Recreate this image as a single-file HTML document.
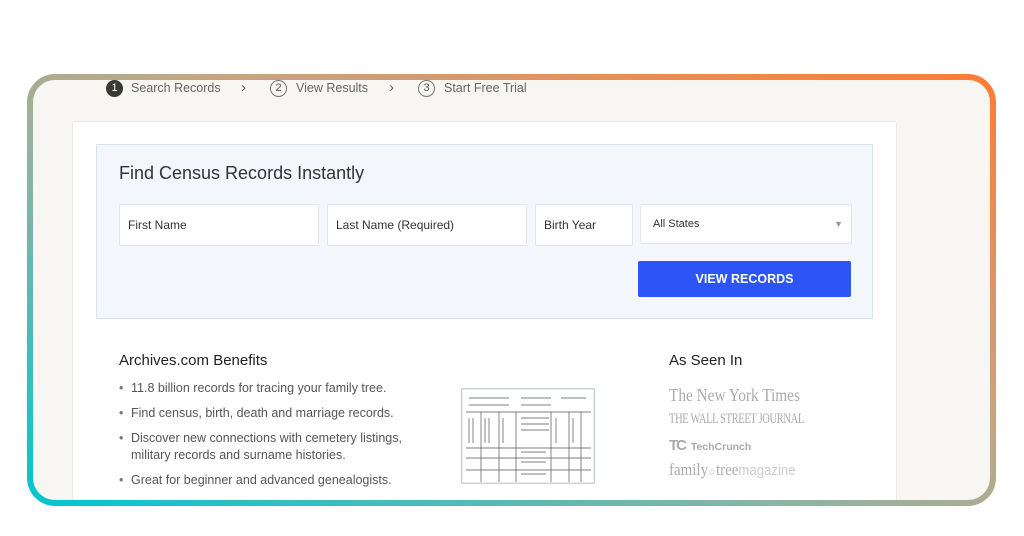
<!DOCTYPE html>
<html><head><style>
*{margin:0;padding:0;box-sizing:border-box}
body{width:1024px;height:536px;background:#fff;font-family:"Liberation Sans",sans-serif;position:relative;overflow:hidden}
.frame{position:absolute;left:27px;top:74px;width:969px;height:432px;border-radius:28px;background:linear-gradient(to top right,#00c6d0 0%,#8fb3a2 40%,#c7a57f 60%,#ff7b35 100%);padding:6px}
.inner{position:relative;width:100%;height:100%;border-radius:22px;background:#f7f6f3;overflow:hidden}
.abs{position:absolute}
.st{position:absolute;top:0;font-size:12.5px;color:#666;line-height:16px;white-space:nowrap}
.c{position:absolute;top:0;width:17px;height:17px;border-radius:50%;border:1px solid #777;text-align:center;line-height:15px;font-size:11px;color:#555}
.c.f{background:#3a3a34;color:#fff;border-color:#3a3a34}
.card{left:39px;top:41px;width:825px;height:400px;background:#fff;border:1px solid #e8e8e8;border-radius:3px}
.blue{left:23px;top:22px;width:777px;height:175px;background:#f3f7fb;border:1px solid #d5e4f3}
h2{position:absolute;left:22px;top:18px;font-size:18px;font-weight:normal;color:#333}
.in{position:absolute;top:59px;height:42px;background:#fff;border:1px solid #e2e6ea;border-radius:2px;font-size:12px;color:#333;padding-left:8px;line-height:40px}
.btn{position:absolute;left:541px;top:116px;width:213px;height:36px;background:#2d55f5;color:#fff;font-size:12.5px;font-weight:bold;text-align:center;line-height:36px;border-radius:2px}
h3{position:absolute;font-size:15px;color:#222;font-weight:normal}
ul{position:absolute;left:46px;top:258px;list-style:none;font-size:12.5px;color:#555;line-height:17px}
ul li{padding-left:12px;position:relative;margin-bottom:8px;width:300px}
ul li:before{content:"•";position:absolute;left:0;color:#777}
.logo{position:absolute;left:596px;color:#aaa;font-family:"Liberation Serif",serif;white-space:nowrap;transform-origin:left top}
</style></head><body>
<div class="frame"><div class="inner">
<span class="c f" style="left:73px">1</span><span class="st" style="left:98px">Search Records</span><span class="st" style="left:208px;font-size:15px">&#8250;</span>
<span class="c" style="left:237px">2</span><span class="st" style="left:263px">View Results</span><span class="st" style="left:356px;font-size:15px">&#8250;</span>
<span class="c" style="left:385px">3</span><span class="st" style="left:411px">Start Free Trial</span>
<div class="abs card">
 <div class="abs blue">
  <h2>Find Census Records Instantly</h2>
  <div class="in" style="left:22px;width:200px">First Name</div>
  <div class="in" style="left:230px;width:200px">Last Name (Required)</div>
  <div class="in" style="left:438px;width:98px">Birth Year</div>
  <div class="in" style="left:543px;width:212px;height:40px;font-size:11px;line-height:38px;padding-left:12px">All States<span style="position:absolute;right:8px;top:0;color:#999;font-size:9px">&#9660;</span></div>
  <div class="btn">VIEW RECORDS</div>
 </div>
 <h3 style="left:46px;top:230px">Archives.com Benefits</h3>
 <ul>
  <li>11.8 billion records for tracing your family tree.</li>
  <li>Find census, birth, death and marriage records.</li>
  <li>Discover new connections with cemetery listings, military records and surname histories.</li>
  <li>Great for beginner and advanced genealogists.</li>
 </ul>
 <svg class="abs" style="left:388px;top:266px" width="134" height="96" viewBox="0 0 134 96"><rect x="0.5" y="0.5" width="133" height="95" fill="#fff" stroke="#c9d3da" stroke-width="2"/><g stroke="#555" stroke-width="0.7" fill="none"><path d="M5 24H130M5 60H130M5 70H130M5 82H130M20 24V94M38 24V94M55 24V94M90 24V94M108 24V94M120 24V94M8 10h40M60 10h30M100 10h25M8 17h40M60 17h30"/><path d="M8 30v25M12 30v25M24 30v25M28 30v25M42 30v25M60 30h28M60 36h28M60 42h28M95 30v25M112 30v25M60 64h25M60 74h25M60 86h25"/></g></svg>
 <h3 style="left:596px;top:230px">As Seen In</h3>
 <div class="logo" style="top:263px;font-size:18px;transform:scaleX(0.85)">The New York Times</div>
 <div class="logo" style="top:289px;font-size:15px;letter-spacing:-0.5px;transform:scaleX(0.7)">THE WALL STREET JOURNAL</div>
 <div class="logo" style="top:315px;font-size:10.5px;font-family:'Liberation Sans',sans-serif;font-weight:bold"><span style="font-size:15px;letter-spacing:-2px">TC</span>&nbsp; TechCrunch</div>
 <div class="logo" style="top:338px;font-size:17px;transform:scaleX(0.88)">family<span style="font-size:10px">&#9734;</span>tree<span style="font-family:'Liberation Sans';color:#ccc;font-size:15px">magazine</span></div>
</div>
</div></div>
</body></html>
